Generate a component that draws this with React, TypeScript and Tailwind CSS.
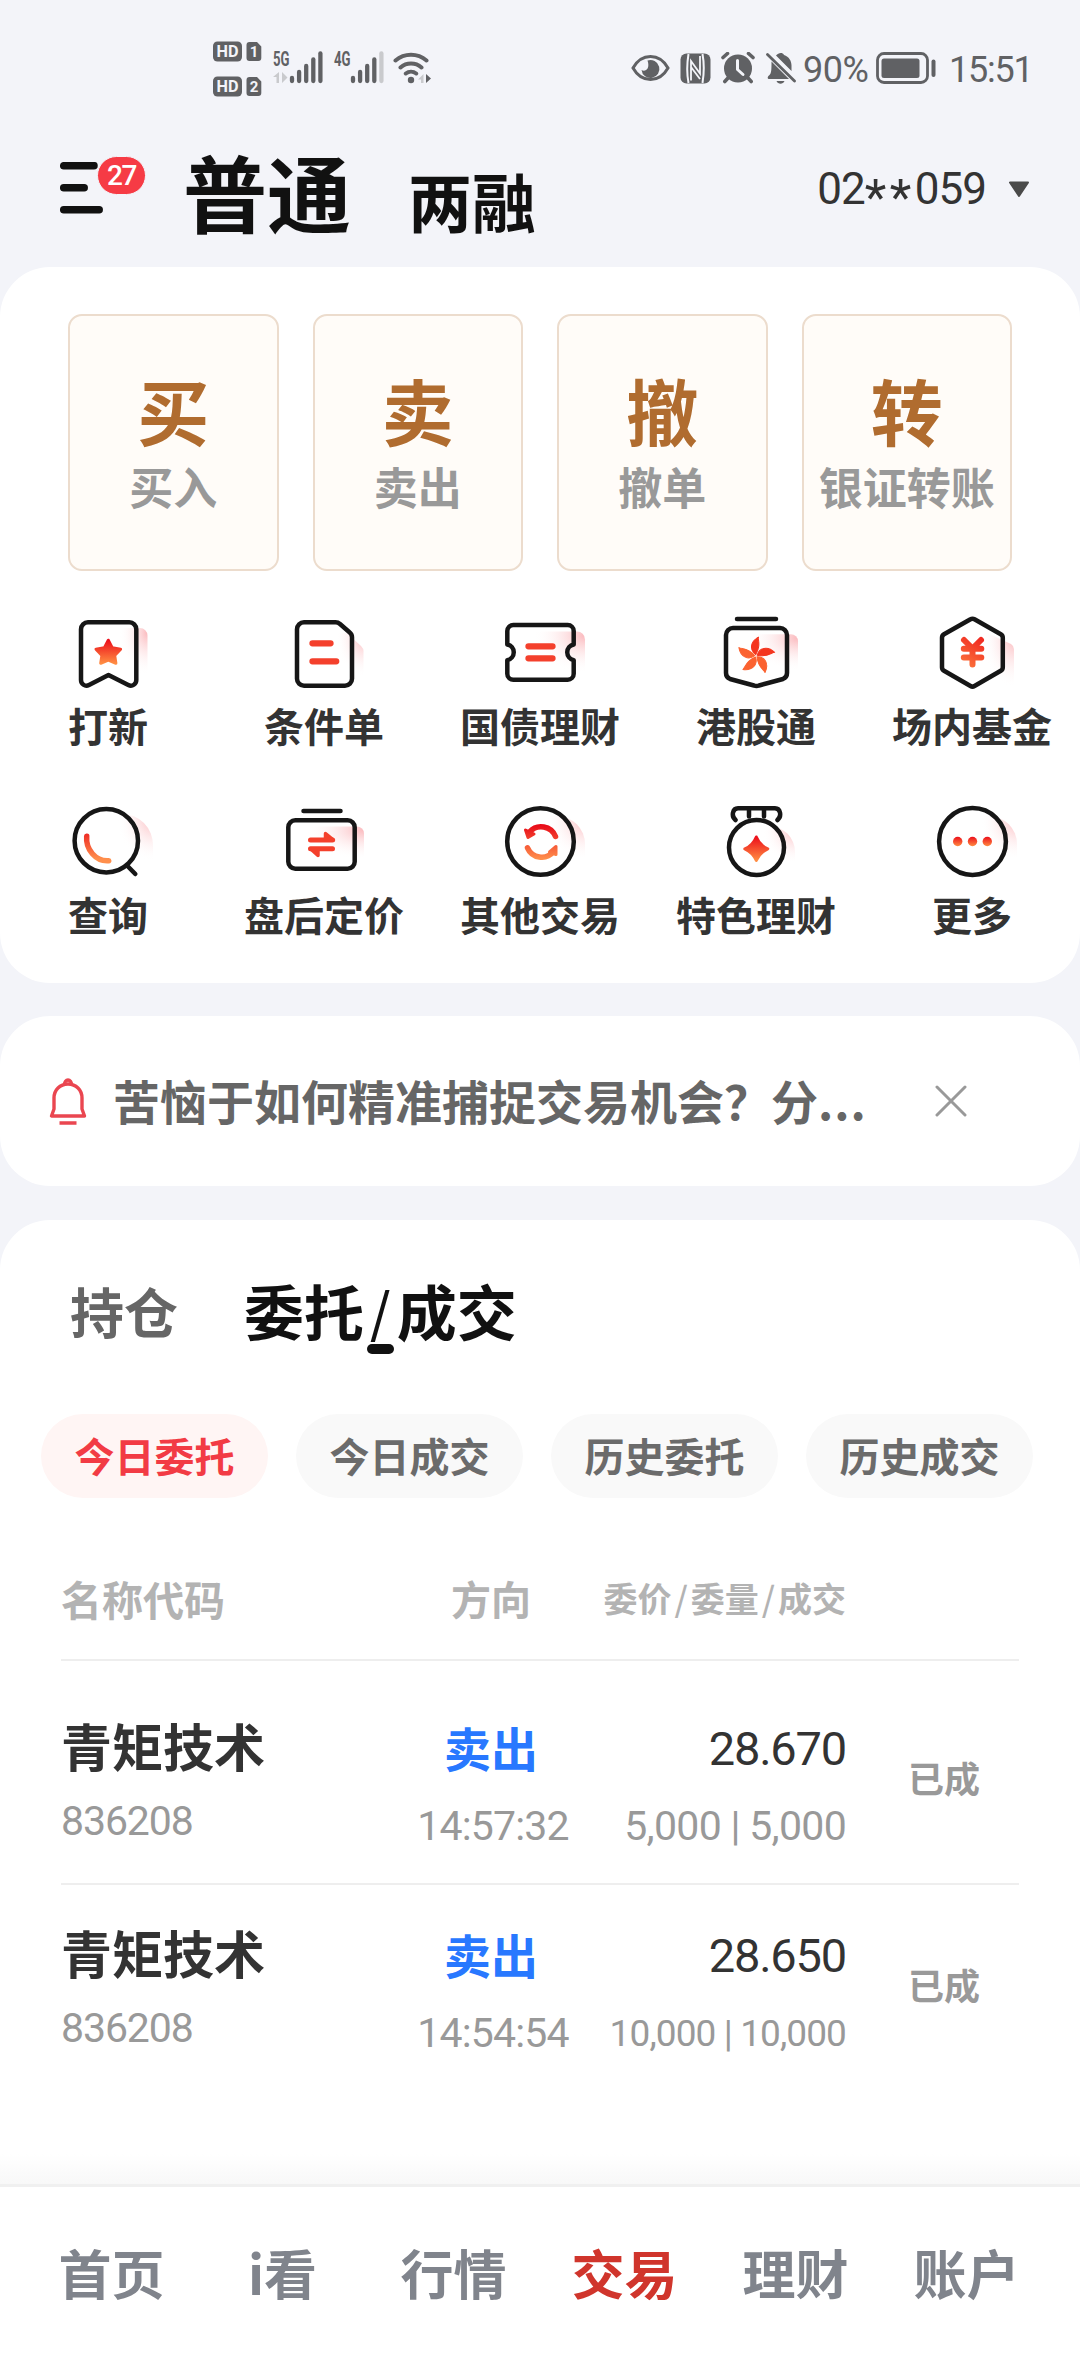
import type { ReactNode } from 'react';

type Order = {
  name: string;
  code: string;
  side: string;
  time: string;
  price: string;
  qty: string;
  compact?: boolean;
  status: string;
};

const ACTIONS = [
  { mark: '买', label: '买入' },
  { mark: '卖', label: '卖出' },
  { mark: '撤', label: '撤单' },
  { mark: '转', label: '银证转账' },
];

const CHIPS = ['今日委托', '今日成交', '历史委托', '历史成交'];

const ORDERS: Order[] = [
  { name: '青矩技术', code: '836208', side: '卖出', time: '14:57:32', price: '28.670', qty: '5,000 | 5,000', status: '已成' },
  { name: '青矩技术', code: '836208', side: '卖出', time: '14:54:54', price: '28.650', qty: '10,000 | 10,000', compact: true, status: '已成' },
];

const NAV = ['首页', 'i看', '行情', '交易', '理财', '账户'];

const INK = '#161616';
const GREY = '#606164';

/* ---------- status bar ---------- */

function HdBadge({ n }: { n: number }) {
  return (
    <svg width="49" height="21" viewBox="0 0 49 21" aria-hidden>
      <rect x="0" y="0.5" width="29" height="20" rx="4.5" fill={GREY} />
      <text x="14.5" y="16.2" textAnchor="middle" textLength="22" lengthAdjust="spacingAndGlyphs" fontFamily="Roboto, sans-serif" fontWeight="700" fontSize="17" fill="#f3f4f9">
        HD
      </text>
      <path d="M36.5 1h7.500l4.300 4.500V17a3 3 0 0 1-3 3h-8.800a3 3 0 0 1-3-3V4a3 3 0 0 1 3-3z" fill={GREY} />
      <text x="41" y="16" textAnchor="middle" fontFamily="Roboto, sans-serif" fontWeight="700" fontSize="15" fill="#f3f4f9">
        {n}
      </text>
    </svg>
  );
}

function Signal({ label, weak, arrows }: { label: string; weak?: boolean; arrows?: boolean }) {
  const tops = [27, 21, 15, 8.5, 2.5];
  return (
    <svg className="overflow-visible" width="52" height="34" viewBox="0 0 52 34" aria-hidden>
      <text x="0" y="15" textLength="16.5" lengthAdjust="spacingAndGlyphs" fontFamily="Roboto, sans-serif" fontWeight="700" fontSize="19.5" fill={GREY}>
        {label}
      </text>
      {arrows && <path d="M6 21v11H3.500v-6H0zM9 21l5.500 5.500L9 32z" fill="#c9cacd" />}
      {tops.map((t, i) => (
        <path
          key={t}
          d={`M${19 + i * 7.1} ${t}V30`}
          stroke={weak && i === 4 ? '#c9cacd' : GREY}
          strokeWidth="4.300"
          strokeLinecap="round"
        />
      ))}
    </svg>
  );
}

function Wifi() {
  return (
    <svg width="40" height="34" viewBox="0 0 40 34" fill="none" stroke={GREY} strokeWidth="4" strokeLinecap="round" aria-hidden>
      <path d="M2.500 9.500a24 24 0 0 1 31 0M7.500 16.500a16 16 0 0 1 21 0M12.800 22.500a8.500 8.500 0 0 1 10.400 0" />
      <circle cx="18" cy="29" r="3.200" fill={GREY} stroke="none" />
      <path d="M30.500 23v9h-2.500v-3.500h-3z" fill="#c9cacd" stroke="none" />
      <path d="M33 23l5 4.500-5 4.500z" fill={GREY} stroke="none" />
    </svg>
  );
}

function Eye() {
  return (
    <svg width="39" height="28" viewBox="0 0 39 28" fill="none" aria-hidden>
      <path d="M2 14C6.500 6 12.500 2.500 19.500 2.500S32.500 6 37 14c-4.500 8-10.500 11.500-17.500 11.500S6.500 22 2 14z" stroke={GREY} strokeWidth="3" />
      <path d="M16.500 6.500a9 9 0 1 1-6 9.500c3.500 2.500 9-1 6-9.500z" fill={GREY} />
    </svg>
  );
}

function Nfc() {
  return (
    <svg width="31" height="31" viewBox="0 0 31 31" aria-hidden>
      <rect x="0.5" y="0.5" width="30" height="30" rx="6" fill={GREY} />
      <path d="M8.500 30c-1.500-8-1.500-20 0-29M22.500 1c1.500 8 1.500 20 0 29" stroke="#f3f4f9" strokeWidth="2" fill="none" />
      <path d="M11 27.500V8l9 12.500V3M11 14l9 12" stroke="#f3f4f9" strokeWidth="1.8" fill="none" />
    </svg>
  );
}

function Alarm() {
  return (
    <svg width="34" height="32" viewBox="0 0 34 32" fill="none" aria-hidden>
      <circle cx="17" cy="16.5" r="14" fill={GREY} />
      <path d="M2 5.500l4.500-4M32 5.500l-4.500-4M7 26l-3.200 3.500M27 26l3.200 3.500" stroke={GREY} strokeWidth="3.6" strokeLinecap="round" />
      <path d="M16.500 8.500v9l5.500 5" stroke="#f3f4f9" strokeWidth="3" strokeLinecap="round" strokeLinejoin="round" />
    </svg>
  );
}

function Muted() {
  return (
    <svg width="30" height="32" viewBox="0 0 30 32" fill="none" aria-hidden>
      <path d="M10 3.500C12.500.5 16.500 0 18 3c5 1.500 7.500 6 7.500 10.500V19z" fill={GREY} />
      <path d="M5.500 9.500L23 27H2.500c-1.500-1-.8-2.500 1-4 1.800-2 2-4 2-13.500z" fill={GREY} />
      <path d="M1.500 2.500l27 26.500" stroke={GREY} strokeWidth="2.800" strokeLinecap="round" />
      <path d="M10.500 29h8c-1.500 3.500-6.500 3.500-8 0z" fill={GREY} />
    </svg>
  );
}

function Battery() {
  return (
    <svg width="60" height="32" viewBox="0 0 60 32" fill="none" aria-hidden>
      <rect x="1.5" y="1.5" width="50" height="29" rx="6.5" stroke={GREY} strokeWidth="2.8" />
      <rect x="5.5" y="6.500" width="38" height="19.5" rx="2.5" fill={GREY} />
      <rect x="55.5" y="7.5" width="4" height="17.5" rx="2" fill={GREY} />
    </svg>
  );
}

function StatusBar() {
  return (
    <div className="flex h-[132px] items-start pl-[213px] pr-[49px] text-[#606164]">
      <div className="mt-[41px] flex flex-col gap-[14px]">
        <HdBadge n={1} />
        <HdBadge n={2} />
      </div>
      <div className="mt-[51px] ml-[11px] flex">
        <Signal label="5G" arrows />
        <div className="ml-[9px]">
          <Signal label="4G" weak />
        </div>
        <div className="ml-[7px]">
          <Wifi />
        </div>
      </div>
      <div className="mt-[52px] ml-auto flex h-8 items-center">
        <Eye />
        <div className="ml-[10px]">
          <Nfc />
        </div>
        <div className="ml-[10px]">
          <Alarm />
        </div>
        <div className="ml-[11px]">
          <Muted />
        </div>
        <span className="ml-[7px] w-[73px] pt-1 font-[Roboto] text-[36px] leading-none font-[450] tracking-[-0.5px]">90%</span>
        <Battery />
        <span className="ml-[13px] w-[82px] pt-1 font-[Roboto] text-[36px] leading-none font-[450] tracking-[-1.2px] whitespace-nowrap">15:51</span>
      </div>
    </div>
  );
}

/* ---------- header ---------- */

function Header() {
  return (
    <header className="flex h-[135px] items-start pl-[60px] pr-[50px]">
      <div className="relative mt-[30px] h-[52px] w-[86px]">
        <svg width="46" height="52" viewBox="0 0 46 52" stroke="#111" strokeWidth="7.500" strokeLinecap="round" aria-hidden>
          <path d="M3.700 3.700H34M3.700 25.700h20.500M3.700 47.800h35.500" />
        </svg>
        <span className="absolute -top-[6px] left-[37px] flex h-[39px] w-[49px] items-center justify-center rounded-full border border-[#f3f4f9] bg-[#f63b45] font-[Roboto] text-[28px] leading-none font-medium tracking-[-1.5px] text-white">
          27
        </span>
      </div>
      <div className="ml-[37px] flex items-baseline text-[#111]">
        <h1 className="mt-[17px] text-[84px] leading-none font-bold">普通</h1>
        <span className="ml-[57px] text-[64px] leading-none font-bold">两融</span>
      </div>
      <div className="mt-[35px] ml-auto flex items-center text-[#333]">
        <span className="flex font-[Roboto] text-[44px] leading-none font-[450] tracking-[-1px]">
          02<span className="relative top-[9px] text-[50px] leading-[44px] tracking-[3.500px]">**</span>059
        </span>
        <svg className="ml-[22px]" width="22" height="17" viewBox="0 0 22 17" aria-hidden>
          <path d="M2 1.500h18L11 15z" fill="#4a4a4a" stroke="#4a4a4a" strokeWidth="2" strokeLinejoin="round" />
        </svg>
      </div>
    </header>
  );
}

/* ---------- quick entries ---------- */

function Icon({ glow, children }: { glow: string; children: ReactNode }) {
  return (
    <svg className="overflow-visible" width="90" height="90" viewBox="0 0 90 90" fill="none" stroke={INK} strokeWidth="4.500" strokeLinecap="round" strokeLinejoin="round" aria-hidden>
      <path d={glow} fill="url(#glow)" stroke="none" />
      {children}
    </svg>
  );
}

function Gradients() {
  return (
    <svg width="0" height="0" className="absolute" aria-hidden>
      <defs>
        <radialGradient id="glow" cx="1" cy="0.1" r="0.95">
          <stop offset="0" stopColor="#fbb9bd" />
          <stop offset="1" stopColor="#fff" stopOpacity="0" />
        </radialGradient>
        <linearGradient id="flame" x1="0" y1="0" x2="0" y2="1">
          <stop offset="0" stopColor="#ec0f1b" />
          <stop offset="1" stopColor="#ff8c42" />
        </linearGradient>
        <linearGradient id="ember" gradientUnits="userSpaceOnUse" x1="54" y1="30" x2="34" y2="64">
          <stop offset="0" stopColor="#f02a22" />
          <stop offset="1" stopColor="#ff8440" />
        </linearGradient>
        <linearGradient id="spin" gradientUnits="userSpaceOnUse" x1="0" y1="27" x2="0" y2="61">
          <stop offset="0" stopColor="#e80a18" />
          <stop offset="1" stopColor="#ff8f4c" />
        </linearGradient>
      </defs>
    </svg>
  );
}

const RED = '#f4402c';

function IpoIcon() {
  return (
    <Icon glow="M55 19h22a7.500 7.500 0 0 1 7.500 7.500V64H55z">
      <path d="M25 13.300h41.300a7 7 0 0 1 7 7V71c0 4-4 7-8 5L45.500 66 26 76c-4 2-8-1-8-5V20.300a7 7 0 0 1 7-7z" />
      <path d="M45.300 31.200l3.900 7.600 8.400 1.400-5.900 6.200 1.200 7.900-7.600-3.100-7.600 3.100 1.200-7.900-5.900-6.200 8.400-1.400z" fill="url(#flame)" stroke="url(#flame)" strokeWidth="3" />
    </Icon>
  );
}

function ConditionIcon() {
  return (
    <Icon glow="M56 24h12l14 13q2.500 2.500 2.500 5V66H56z">
      <path d="M25 13.300h31.500q2.500 0 4.500 1.700l9.500 8.300q2.500 2 2.500 5v41.400a7 7 0 0 1-7 7H25a7 7 0 0 1-7-7V20.300a7 7 0 0 1 7-7z" />
      <path d="M33.500 34.300h18M33.500 52.300h23.700" stroke={RED} strokeWidth="6.300" />
    </Icon>
  );
}

function BondIcon() {
  return (
    <Icon glow="M36 22.500h46a8 8 0 0 1 8 8V62H36z">
      <path d="M18.300 16h54.400a6 6 0 0 1 6 6v13.500a8 8 0 0 0 0 15.700V64.700a6 6 0 0 1-6 6H18.300a6 6 0 0 1-6-6V51.200a8 8 0 0 0 0-15.700V22a6 6 0 0 1 6-6z" />
      <path d="M33.500 37.300h24M33.500 49.300h24" stroke={RED} strokeWidth="6.300" />
    </Icon>
  );
}

function HkIcon() {
  const petal = 'M44.800 45.500c-6.500-4-6-13 2.700-17.500-.8 3.500 2.800 8-2.700 17.500z';
  return (
    <Icon glow="M34 25.300h46a7 7 0 0 1 7 7V60H34z">
      <path d="M26 10h39" />
      <path d="M22 19h47a7 7 0 0 1 7 7v38q0 4.500-4 6L48 76.500q-2.500 1-5 0L19 70q-4-1.500-4-6V26a7 7 0 0 1 7-7z" />
      {[0, 72, 144, 216, 288].map((deg) => (
        <path key={deg} d={petal} transform={`rotate(${deg} 45 46.800)`} fill={deg < 100 ? '#f4361f' : '#fb6230'} stroke={deg < 100 ? '#f4361f' : '#fb6230'} strokeWidth="1" />
      ))}
    </Icon>
  );
}

function FundIcon() {
  return (
    <Icon glow="M54 24h6l24 11q3 2 3 5V76H54z">
      <path d="M43.500 10.300q2-1.200 4 0l26.300 15q2 1.200 2 3.500v29.500q0 2.300-2 3.500L47.500 77q-2 1.200-4 0L17 61.800q-2-1.200-2-3.500V28.800q0-2.300 2-3.500z" />
      <path d="M37 31l8.500 8.500L54 31M36.800 39.700h17.500M36.800 48.600h17.500M45.500 40v15.500" stroke="url(#ember)" strokeWidth="6" />
    </Icon>
  );
}

function QueryIcon() {
  return (
    <Icon glow="M52 16h7a31 31 0 0 1 31 31v14H52z">
      <circle cx="43.3" cy="42.7" r="31.7" fill="none" />
      <path d="M64.500 68l7.800 8" />
      <path d="M23.700 38.200c-1.200 13 9 25.500 22 24.500" stroke="url(#spin)" strokeWidth="5.500" />
    </Icon>
  );
}

function AfterHoursIcon() {
  return (
    <Icon glow="M24 28.500h54a7 7 0 0 1 7 7V60H24z">
      <path d="M24.500 13h37" />
      <rect x="9.3" y="22.3" width="66.4" height="48.4" rx="7" />
      <path d="M31.500 42h22M31.500 50.700h22" stroke={RED} strokeWidth="5" />
      <path d="M46.500 35.500l8 6.500h-8zM39 57.500l-7.500-6.800H39z" fill={RED} stroke={RED} strokeWidth="3.500" />
    </Icon>
  );
}

function OtherIcon() {
  return (
    <Icon glow="M50 18h12a28 28 0 0 1 28 28v14H50z">
      <circle cx="45.5" cy="43.5" r="33.3" />
      <path d="M60.500 38.500a15.500 15.500 0 0 0-26-4.500M32.500 49.800a15.500 15.500 0 0 0 26 4" stroke="url(#spin)" strokeWidth="5.500" />
      <path d="M30.500 32l2.500 7.500 6-3.500zM61 48.500v8l-6.500-2.500z" fill="url(#spin)" stroke="url(#spin)" strokeWidth="3" />
    </Icon>
  );
}

function FeaturedIcon() {
  return (
    <Icon glow="M50 28h8a26 26 0 0 1 26 26v10H50z">
      <path d="M24.500 22c-4.500-4-3-11.700 2.500-11.700h37c5.500 0 7 7.700 2.500 11.700M38 11v7.500M53 11v7.500" />
      <circle cx="45.5" cy="49.5" r="27.5" />
      <path d="M45.300 39c2.500 6 5.500 9.500 11.500 11.800-6 2.700-9 6-11.500 11.700-2.500-5.700-5.500-9-11.500-11.700 6-2.300 9-5.800 11.500-11.800z" fill="url(#flame)" stroke="url(#flame)" strokeWidth="3" />
    </Icon>
  );
}

function MoreIcon() {
  return (
    <Icon glow="M52 18h10a28 28 0 0 1 28 28v14H52z">
      <circle cx="45.5" cy="43.5" r="33.4" />
      {[30.7, 45.5, 60.3].map((cx) => (
        <circle key={cx} cx={cx} cy="43.5" r="4.7" fill="url(#flame)" stroke="none" />
      ))}
    </Icon>
  );
}

const ENTRIES = [
  { label: '打新', icon: <IpoIcon /> },
  { label: '条件单', icon: <ConditionIcon /> },
  { label: '国债理财', icon: <BondIcon /> },
  { label: '港股通', icon: <HkIcon /> },
  { label: '场内基金', icon: <FundIcon /> },
  { label: '查询', icon: <QueryIcon /> },
  { label: '盘后定价', icon: <AfterHoursIcon /> },
  { label: '其他交易', icon: <OtherIcon /> },
  { label: '特色理财', icon: <FeaturedIcon /> },
  { label: '更多', icon: <MoreIcon /> },
];

function TradePanel() {
  return (
    <section className="h-[716px] rounded-[50px] bg-white pt-[47px]">
      <div className="grid grid-cols-4 gap-[34px] px-[68px]">
        {ACTIONS.map((a) => (
          <button key={a.label} type="button" className="flex h-[257px] flex-col items-center rounded-[14px] border-2 border-[#ecdccd] bg-[#fffcf8] pt-[57px]">
            <span className="text-[72px] leading-none font-bold text-[#b06c2f]">{a.mark}</span>
            <span className="mt-[19px] text-[44px] leading-none font-bold whitespace-nowrap text-[#999]">{a.label}</span>
          </button>
        ))}
      </div>
      <div className="mt-[38px] grid grid-cols-5 gap-y-[49px]">
        {ENTRIES.map((e) => (
          <div key={e.label} className="flex h-[140px] flex-col items-center">
            {e.icon}
            <span className="mt-[6px] text-[40px] leading-none font-bold whitespace-nowrap text-[#333]">{e.label}</span>
          </div>
        ))}
      </div>
    </section>
  );
}

/* ---------- notice ---------- */

function Notice() {
  return (
    <section className="mt-[33px] flex h-[170px] items-center rounded-[50px] bg-white pl-[49px] pr-[113px]">
      <svg width="38" height="48" viewBox="0 0 38 48" fill="none" stroke="#ea4650" strokeWidth="3.400" strokeLinejoin="round" aria-hidden>
        <path d="M2.500 39h33l-2.500-7V21c0-8-6-14-14-14S5 13 5 21v11z" />
        <path d="M15.500 7.500a3.500 4.500 0 0 1 7 0M10.500 46h17" />
      </svg>
      <p className="ml-[26px] pb-[3px] text-[47px] leading-none font-bold whitespace-nowrap text-[#666]">
        苦恼于如何精准捕捉交易机会？分<span className="tracking-[1px]">...</span>
      </p>
      <svg className="ml-auto" width="32" height="32" viewBox="0 0 32 32" stroke="#999" strokeWidth="3" strokeLinecap="round" aria-hidden>
        <path d="M2 2l28 28M30 2L2 30" />
      </svg>
    </section>
  );
}

/* ---------- orders ---------- */

function OrderRow({ o }: { o: Order }) {
  return (
    <div className="grid h-[169px] grid-cols-[330px_200px_255px_173px]">
      <div className="flex flex-col">
        <span className="flex h-[68px] items-center pb-[5px] text-[51px] leading-none font-bold text-[#333]">{o.name}</span>
        <span className="mt-[5px] flex h-[68px] items-center font-[Roboto] text-[41px] leading-none font-[450] tracking-[-1.1px] text-[#999]">{o.code}</span>
      </div>
      <div className="flex flex-col items-center">
        <span className="flex h-[68px] items-center pb-[4px] text-[47px] leading-none font-bold text-[#2878ff]">{o.side}</span>
        <span className="mt-[10px] flex h-[68px] items-center pl-1 font-[Roboto] text-[41px] leading-none font-[450] tracking-[-0.8px] text-[#999]">{o.time}</span>
      </div>
      <div className="flex flex-col items-end whitespace-nowrap">
        <span className="flex h-[68px] items-center font-[Roboto] text-[47px] leading-none font-[450] tracking-[-1.2px] text-[#333]">{o.price}</span>
        <span
          className={
            o.compact
              ? 'mt-[10px] flex h-[68px] items-center font-[Roboto] text-[37px] leading-none font-[450] tracking-[-0.9px] text-[#999]'
              : 'mt-[10px] flex h-[68px] items-center font-[Roboto] text-[41px] leading-none font-[450] tracking-[-0.7px] text-[#999]'
          }
        >
          {o.qty}
        </span>
      </div>
      <div className="flex h-[130px] items-center justify-center pb-1 pl-[23px]">
        <span className="text-[36px] leading-none font-bold text-[#999]">{o.status}</span>
      </div>
    </div>
  );
}

function Orders() {
  return (
    <section className="mt-[34px] flex flex-1 flex-col rounded-t-[50px] bg-white">
      <div className="flex h-[194px] items-start pl-[70px]">
        <span className="mt-[64px] text-[54px] leading-none font-bold text-[#666]">持仓</span>
        <div className="mt-[60px] ml-[66px] flex flex-col items-center">
          <span className="flex items-center text-[60px] leading-none font-bold text-[#111]">
            委托<span className="mx-[6px] pb-[2px] text-[53px] font-medium">/</span>成交
          </span>
          <span className="mt-[4px] h-[10px] w-[27px] rounded-full bg-[#111]" />
        </div>
      </div>
      <div className="flex gap-[28px] pl-[41px]">
        {CHIPS.map((c, i) => (
          <button
            key={c}
            type="button"
            className={
              i === 0
                ? 'flex h-[84px] w-[227px] items-center justify-center rounded-full bg-[#fff5f4] pb-[3px] text-[40px] leading-none font-bold text-[#f23b44]'
                : 'flex h-[84px] w-[227px] items-center justify-center rounded-full bg-[#f9f9f9] pb-[3px] text-[40px] leading-none font-bold text-[#6b6b6b]'
            }
          >
            {c}
          </button>
        ))}
      </div>
      <div className="mx-[61px]">
        <div className="grid h-[163px] grid-cols-[330px_200px_255px_173px] items-center border-b-2 border-[#eee] pt-[39px] leading-none font-bold text-[#b3b3b3]">
          <span className="text-[41px]">名称代码</span>
          <span className="text-center text-[40px]">方向</span>
          <span className="text-right text-[34px]">
            委价<span className="mx-[3px] font-medium">/</span>委量<span className="mx-[3px] font-medium">/</span>成交
          </span>
        </div>
        <div className="border-b-2 border-[#eee] pt-[53px]">
          <OrderRow o={ORDERS[0]} />
        </div>
        <div className="pt-[36px]">
          <OrderRow o={ORDERS[1]} />
        </div>
      </div>
      <div className="mt-auto h-[30px] bg-linear-to-b from-white to-[#f8f8f8]" />
    </section>
  );
}

function BottomNav() {
  return (
    <nav className="flex h-[192px] border-t-[3px] border-[#f0f0f0] bg-white px-[26px]">
      {NAV.map((n) => (
        <a
          key={n}
          className={
            n === '交易'
              ? 'mt-[59px] w-[171px] text-center text-[53px] leading-none font-bold text-[#d0352c]'
              : 'mt-[59px] w-[171px] text-center text-[53px] leading-none font-bold text-[#80848c]'
          }
        >
          {n}
        </a>
      ))}
    </nav>
  );
}

export default function App() {
  return (
    <div className="flex h-[2376px] w-[1080px] flex-col overflow-hidden bg-[#f3f4f9] font-['Noto_Sans_CJK_SC',sans-serif]">
      <Gradients />
      <StatusBar />
      <Header />
      <TradePanel />
      <Notice />
      <Orders />
      <BottomNav />
    </div>
  );
}
